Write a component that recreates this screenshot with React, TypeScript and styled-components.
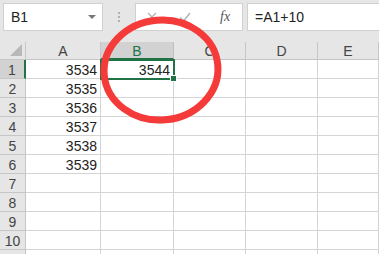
import React from "react";
import styled, { createGlobalStyle } from "styled-components";

const Global = createGlobalStyle`
  html, body { margin: 0; padding: 0; background: #fff; overflow: hidden; }
  body { font-family: "Liberation Sans", Arial, sans-serif; }
`;

const Page = styled.div`
  width: 379px;
  height: 254px;
  position: relative;
  overflow: hidden;
  background: #fff;
`;

const Toolbar = styled.div`
  height: 42px;
  background: #e6e6e6;
  display: flex;
  align-items: flex-start;
  padding: 3px 0 0 3px;
  box-sizing: border-box;
`;

const NameBox = styled.div`
  width: 100px;
  height: 28px;
  box-sizing: border-box;
  background: #fff;
  border: 1px solid #d0d0d0;
  display: flex;
  align-items: center;
  padding: 0 0 0 7px;
  font-size: 14px;
  color: #222;
`;

const NameText = styled.span`
  flex: 1;
`;

const DropArrow = styled.span`
  width: 0;
  height: 0;
  border-left: 4px solid transparent;
  border-right: 4px solid transparent;
  border-top: 4px solid #777;
  margin-right: 6px;
`;

const Dots = styled.div`
  width: 32px;
  height: 28px;
  display: flex;
  flex-direction: column;
  align-items: center;
  justify-content: center;
  gap: 2px;
`;

const Dot = styled.span`
  width: 2px;
  height: 2px;
  background: #b0b0b0;
`;

const ButtonBox = styled.div`
  width: 108px;
  height: 28px;
  box-sizing: border-box;
  background: #fff;
  border: 1px solid #d0d0d0;
  display: flex;
  align-items: center;
  padding-left: 9px;
`;

const IconBtn = styled.span<{ $w: number }>`
  width: ${(p) => p.$w}px;
  display: flex;
  align-items: center;
  justify-content: center;
`;

const Fx = styled.span`
  font-family: "Liberation Serif", "Times New Roman", serif;
  font-style: italic;
  font-size: 14px;
  color: #555;
  margin-left: 9px;
`;

const FormulaInput = styled.div`
  flex: 1;
  height: 28px;
  margin-left: 4px;
  box-sizing: border-box;
  background: #fff;
  border: 1px solid #d0d0d0;
  border-right: none;
  display: flex;
  align-items: center;
  padding-left: 7px;
  font-size: 14px;
  color: #222;
`;

const Grid = styled.div`
  display: grid;
  grid-template-columns: 26px 75px 73px 72px 72px 1fr;
  grid-template-rows: 18px;
  grid-auto-rows: 19px;
`;

const ColHead = styled.div<{ $sel?: boolean }>`
  background: ${(p) => (p.$sel ? "#d2d2d2" : "#e6e6e6")};
  border-right: 1px solid ${(p) => (p.$sel ? "#c0c0c0" : "#c6c6c6")};
  border-bottom: ${(p) => (p.$sel ? "2px solid #217346" : "1px solid #c6c6c6")};
  box-sizing: border-box;
  display: flex;
  align-items: center;
  justify-content: center;
  font-size: 14px;
  color: ${(p) => (p.$sel ? "#217346" : "#444")};
  padding-top: 1px;
`;

const Corner = styled.div`
  background: #e6e6e6;
  border-right: 1px solid #c6c6c6;
  border-bottom: 1px solid #c6c6c6;
  box-sizing: border-box;
  display: flex;
  align-items: flex-end;
  justify-content: flex-end;
  padding: 0 3px 3px 0;
`;

const Tri = styled.span`
  width: 0;
  height: 0;
  border-left: 12px solid transparent;
  border-bottom: 12px solid #b8b8b8;
`;

const RowHead = styled.div<{ $sel?: boolean }>`
  background: ${(p) => (p.$sel ? "#d2d2d2" : "#e6e6e6")};
  border-right: ${(p) => (p.$sel ? "2px solid #217346" : "1px solid #c6c6c6")};
  border-bottom: 1px solid #c6c6c6;
  box-sizing: border-box;
  display: flex;
  align-items: center;
  justify-content: center;
  font-size: 14px;
  color: #444;
  padding-top: 1px;
`;

const Cell = styled.div<{ $sel?: boolean }>`
  position: relative;
  border-right: 1px solid #d4d4d4;
  border-bottom: 1px solid #d4d4d4;
  box-sizing: border-box;
  display: flex;
  align-items: center;
  justify-content: flex-end;
  padding: 1px 3px 0 0;
  font-size: 14px;
  color: #222;
  ${(p) =>
    p.$sel
      ? `outline: 2px solid #217346; outline-offset: -1px; z-index: 1;`
      : ""}
`;

const Handle = styled.span`
  position: absolute;
  right: -4px;
  bottom: -4px;
  width: 5px;
  height: 5px;
  background: #217346;
  border: 1px solid #fff;
`;

const Overlay = styled.svg`
  position: absolute;
  left: 0;
  top: 0;
  pointer-events: none;
  z-index: 5;
`;

const cols = ["A", "B", "C", "D", "E"];
const dataA: Record<number, string> = {
  1: "3534",
  2: "3535",
  3: "3536",
  4: "3537",
  5: "3538",
  6: "3539",
};

export default function App() {
  const rows = Array.from({ length: 11 }, (_, i) => i + 1);
  return (
    <Page>
      <Global />
      <Toolbar>
        <NameBox>
          <NameText>B1</NameText>
          <DropArrow />
        </NameBox>
        <Dots>
          <Dot />
          <Dot />
          <Dot />
        </Dots>
        <ButtonBox>
          <IconBtn $w={14}>
            <svg width="10" height="10" viewBox="0 0 10 10">
              <path d="M1 1L9 9M9 1L1 9" stroke="#b5b5b5" strokeWidth="1.4" fill="none" />
            </svg>
          </IconBtn>
          <IconBtn $w={52}>
            <svg width="12" height="10" viewBox="0 0 12 10">
              <path d="M1 5.5L4.5 9L11 1" stroke="#b5b5b5" strokeWidth="1.5" fill="none" />
            </svg>
          </IconBtn>
          <Fx>fx</Fx>
        </ButtonBox>
        <FormulaInput>=A1+10</FormulaInput>
      </Toolbar>
      <Grid>
        <Corner>
          <Tri />
        </Corner>
        {cols.map((c) => (
          <ColHead key={c} $sel={c === "B"}>
            {c}
          </ColHead>
        ))}
        {rows.map((r) => (
          <React.Fragment key={r}>
            <RowHead $sel={r === 1}>{r <= 10 ? r : ""}</RowHead>
            <Cell>{dataA[r] ?? ""}</Cell>
            <Cell $sel={r === 1}>
              {r === 1 ? "3544" : ""}
              {r === 1 && <Handle />}
            </Cell>
            <Cell />
            <Cell />
            <Cell />
          </React.Fragment>
        ))}
      </Grid>
      <Overlay width="379" height="254" viewBox="0 0 379 254">
        <ellipse
          cx="161"
          cy="70"
          rx="57"
          ry="50"
          transform="rotate(-5 161 70)"
          fill="none"
          stroke="#f53a3a"
          strokeWidth="7"
        />
      </Overlay>
    </Page>
  );
}
